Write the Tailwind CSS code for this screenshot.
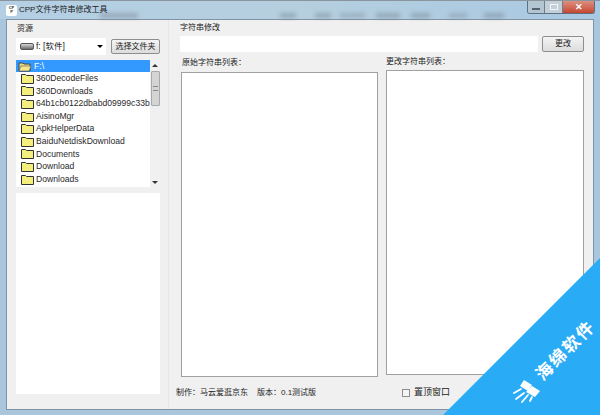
<!DOCTYPE html>
<html lang="en">
<head>
    <meta charset="UTF-8">
    <script src="https://cdn.jsdelivr.net/npm/@tailwindcss/browser@4"></script>
    <title>CPP文件字符串修改工具</title>
</head>
<body class="m-0">
<div class="relative w-[600px] h-[415px] overflow-hidden flex flex-col bg-[#a9c6dc] font-['Liberation_Sans','Noto_Sans_CJK_SC',sans-serif] text-[8px] text-[#222]">

    <!-- title bar -->
    <div class="relative h-[19px] shrink-0 flex items-center pl-[6px] border-t border-[#8a949c] bg-gradient-to-r from-[#b4cfe4] via-[#b5cfdf] to-[#a9c8e2]">
        <!-- blurred desktop behind the glass -->
        <div class="absolute left-[100px] top-[12px] w-[38px] h-[5px] bg-[#66727c]/40 blur-[2px]"></div>
        <div class="absolute left-[280px] top-[12px] w-[16px] h-[5px] bg-[#66727c]/40 blur-[2px]"></div>
        <div class="absolute left-[315px] top-[12px] w-[16px] h-[5px] bg-[#66727c]/40 blur-[2px]"></div>
        <div class="absolute left-[340px] top-[12px] w-[25px] h-[5px] bg-[#66727c]/30 blur-[2px]"></div>
        <div class="absolute left-[376px] top-[12px] w-[24px] h-[5px] bg-[#66727c]/40 blur-[2px]"></div>
        <div class="absolute left-[411px] top-[12px] w-[19px] h-[5px] bg-[#66727c]/40 blur-[2px]"></div>
        <div class="absolute left-[449px] top-[12px] w-[18px] h-[5px] bg-[#66727c]/30 blur-[2px]"></div>
        <div class="absolute left-[484px] top-[12px] w-[20px] h-[5px] bg-[#66727c]/40 blur-[2px]"></div>

        <div class="relative w-[11px] h-[11px] bg-white rounded-[2px] flex flex-col items-center justify-center text-[4px] leading-[4px] font-bold text-[#333]">
            <span>CP</span><span>P</span>
        </div>
        <span class="relative ml-[2px] text-[8px] text-[#222]">CPP文件字符串修改工具</span>
        <!-- window buttons -->
        <div class="absolute right-[5px] top-0 flex h-[13px] border border-t-0 border-[#5d7080] rounded-b-[3px] overflow-hidden">
            <div class="w-[17px] bg-[#b4c5d2] border-r border-[#6d7f8e] flex items-end justify-center pb-[3px]">
                <div class="w-[8px] h-[2px] bg-white border border-[#56626c]"></div>
            </div>
            <div class="w-[18px] bg-[#c3d0da] border-r border-[#6d7f8e] flex items-center justify-center">
                <div class="w-[8px] h-[6px] border border-white/80"></div>
            </div>
            <div class="w-[31px] bg-gradient-to-b from-[#dc8f80] to-[#c4452f] flex items-center justify-center text-white text-[9px] font-bold leading-none">✕</div>
        </div>
    </div>

    <!-- client area -->
    <div class="flex-1 mx-[6px] mb-[5px] bg-[#f0f0f0] border border-[#7f93a4] flex min-h-0">

        <!-- left column: resources -->
        <div class="w-[161px] shrink-0 pl-[9px] flex flex-col">
            <div class="h-[15px] flex items-end leading-[12px] pl-[1px]">资源</div>
            <div class="mt-[3px] flex gap-[5px] items-center">
                <div class="w-[90px] h-[17px] bg-white flex items-center pl-[4px] relative">
                    <div class="w-[14px] h-[7px] rounded-[2px] bg-gradient-to-b from-[#d8d8d8] to-[#6b6b6b] border border-[#555]"></div>
                    <span class="ml-[2px] text-[8.500px]">f: [软件]</span>
                    <div class="absolute right-[3px] top-[7px] w-0 h-0 border-x-[3px] border-x-transparent border-t-[3px] border-t-black"></div>
                </div>
                <button class="w-[49px] h-[15px] rounded-[2px] border border-[#8e8e8e] bg-gradient-to-b from-[#f4f4f4] to-[#dcdcdc] leading-none">选择文件夹</button>
            </div>
            <!-- folder tree -->
            <div class="mt-[5px] w-[144px] h-[127px] bg-white flex overflow-hidden">
                <div class="flex-1 min-w-0 overflow-hidden">
                    <div class="h-[12px] bg-[#3399ff] text-white text-[8.600px] flex items-center pl-[2px]">
                        <svg class="w-[14px] h-[11px] shrink-0" viewBox="0 0 14 11"><path d="M1 2h4l1 1h6v7H1z" fill="#e8d98a" stroke="#444"/><path d="M3 5h10l-2 5H1z" fill="#f6e58a" stroke="#555" stroke-width=".6"/></svg>
                        <span class="ml-[2px]">F:\</span>
                    </div>
                    <div class="flex flex-col text-[8.600px] leading-[12.600px] text-[#2a2a2a] overflow-hidden">
                        <div class="h-[12.600px] shrink-0 flex items-center pl-[5px] whitespace-nowrap"><svg class="w-[13px] h-[11px] shrink-0" viewBox="0 0 13 11"><path d="M.5 1.500h4l1 1h7v8H.5z" fill="#f3ee7e" stroke="#333"/></svg><span class="ml-[2px]">360DecodeFiles</span></div>
                        <div class="h-[12.600px] shrink-0 flex items-center pl-[5px] whitespace-nowrap"><svg class="w-[13px] h-[11px] shrink-0" viewBox="0 0 13 11"><path d="M.5 1.500h4l1 1h7v8H.5z" fill="#f3ee7e" stroke="#333"/></svg><span class="ml-[2px]">360Downloads</span></div>
                        <div class="h-[12.600px] shrink-0 flex items-center pl-[5px] whitespace-nowrap"><svg class="w-[13px] h-[11px] shrink-0" viewBox="0 0 13 11"><path d="M.5 1.500h4l1 1h7v8H.5z" fill="#f3ee7e" stroke="#333"/></svg><span class="ml-[2px]">64b1cb0122dbabd09999c33b</span></div>
                        <div class="h-[12.600px] shrink-0 flex items-center pl-[5px] whitespace-nowrap"><svg class="w-[13px] h-[11px] shrink-0" viewBox="0 0 13 11"><path d="M.5 1.500h4l1 1h7v8H.5z" fill="#f3ee7e" stroke="#333"/></svg><span class="ml-[2px]">AisinoMgr</span></div>
                        <div class="h-[12.600px] shrink-0 flex items-center pl-[5px] whitespace-nowrap"><svg class="w-[13px] h-[11px] shrink-0" viewBox="0 0 13 11"><path d="M.5 1.500h4l1 1h7v8H.5z" fill="#f3ee7e" stroke="#333"/></svg><span class="ml-[2px]">ApkHelperData</span></div>
                        <div class="h-[12.600px] shrink-0 flex items-center pl-[5px] whitespace-nowrap"><svg class="w-[13px] h-[11px] shrink-0" viewBox="0 0 13 11"><path d="M.5 1.500h4l1 1h7v8H.5z" fill="#f3ee7e" stroke="#333"/></svg><span class="ml-[2px]">BaiduNetdiskDownload</span></div>
                        <div class="h-[12.600px] shrink-0 flex items-center pl-[5px] whitespace-nowrap"><svg class="w-[13px] h-[11px] shrink-0" viewBox="0 0 13 11"><path d="M.5 1.500h4l1 1h7v8H.5z" fill="#f3ee7e" stroke="#333"/></svg><span class="ml-[2px]">Documents</span></div>
                        <div class="h-[12.600px] shrink-0 flex items-center pl-[5px] whitespace-nowrap"><svg class="w-[13px] h-[11px] shrink-0" viewBox="0 0 13 11"><path d="M.5 1.500h4l1 1h7v8H.5z" fill="#f3ee7e" stroke="#333"/></svg><span class="ml-[2px]">Download</span></div>
                        <div class="h-[12.600px] shrink-0 flex items-center pl-[5px] whitespace-nowrap"><svg class="w-[13px] h-[11px] shrink-0" viewBox="0 0 13 11"><path d="M.5 1.500h4l1 1h7v8H.5z" fill="#f3ee7e" stroke="#333"/></svg><span class="ml-[2px]">Downloads</span></div>
                    </div>
                </div>
                <!-- scrollbar -->
                <div class="w-[10px] shrink-0 bg-[#f0f0f0] flex flex-col items-center relative">
                    <div class="mt-[4px] w-0 h-0 border-x-[3px] border-x-transparent border-b-[3px] border-b-[#333]"></div>
                    <div class="mt-[4px] w-[9px] h-[35px] rounded-[1px] bg-[#d4d4d4] border border-[#a8a8a8] flex items-center justify-center">
                        <div class="w-[5px] h-[5px] border-y border-[#888]"></div>
                    </div>
                    <div class="absolute bottom-[3px] w-0 h-0 border-x-[3px] border-x-transparent border-t-[3px] border-t-[#333]"></div>
                </div>
            </div>
            <div class="mt-[6px] w-[144px] h-[201px] bg-white"></div>
        </div>

        <!-- right column -->
        <div class="flex-1 min-w-0 flex flex-col pl-[11px] border-l border-[#e6e6e6]">
            <div class="h-[14px] flex items-end leading-[12px]">字符串修改</div>
            <div class="mt-[2px] flex gap-[4px] items-center">
                <div class="w-[358px] h-[16px] bg-white"></div>
                <button class="w-[42px] h-[16px] rounded-[2px] border border-[#8e8e8e] bg-gradient-to-b from-[#f4f4f4] to-[#dcdcdc] leading-none">更改</button>
            </div>
            <div class="mt-[2px] flex gap-[8px] h-[323px] shrink-0">
                <div class="w-[198px] flex flex-col">
                    <div class="h-[18px] flex items-center pl-[2px]">原始字符串列表：</div>
                    <div class="h-[306px] ml-[1px] bg-white border border-[#a0a0a0]"></div>
                </div>
                <div class="w-[198px] flex flex-col">
                    <div class="h-[16px] flex items-center">更改字符串列表：</div>
                    <div class="h-[305px] bg-white border border-[#a0a0a0]"></div>
                </div>
            </div>
            <!-- footer row -->
            <div class="flex-1 flex items-center whitespace-nowrap -ml-[4px]">
                <span class="w-[81px]">制作：马云爱逛京东</span>
                <span class="w-[145px]">版本：0.1测试版</span>
                <div class="w-[8px] h-[8px] border border-[#8e8e8e] bg-[#f4f4f4]"></div>
                <span class="ml-[4px] text-[9px]">置顶窗口</span>
            </div>
        </div>
    </div>

    <!-- watermark corner -->
    <svg class="absolute left-0 top-0" width="600" height="415" viewBox="0 0 600 415">
        <polygon points="443,415 600,258 600,415" fill="#29abf6"/>
        <g fill="#fff">
            <polygon points="524,380 532,385 528,391 520,386"/>
            <polygon points="532,386 540,391 535,397 526,392"/>
        </g>
        <g fill="none" stroke="#fff" stroke-width="1.800" stroke-linecap="round">
            <path d="M521 389l-7 4M524 393l-8 6M528 395l-6 7M532 397l-2 4"/>
            <path d="M526 386l4 5"/>
        </g>
    </svg>
    <div class="absolute left-[528px] top-[341px] w-[76px] h-[20px] -rotate-45 text-white font-bold text-[17px] leading-[20px] tracking-[2px] whitespace-nowrap">海绵软件</div>
</div>
</body>
</html>
